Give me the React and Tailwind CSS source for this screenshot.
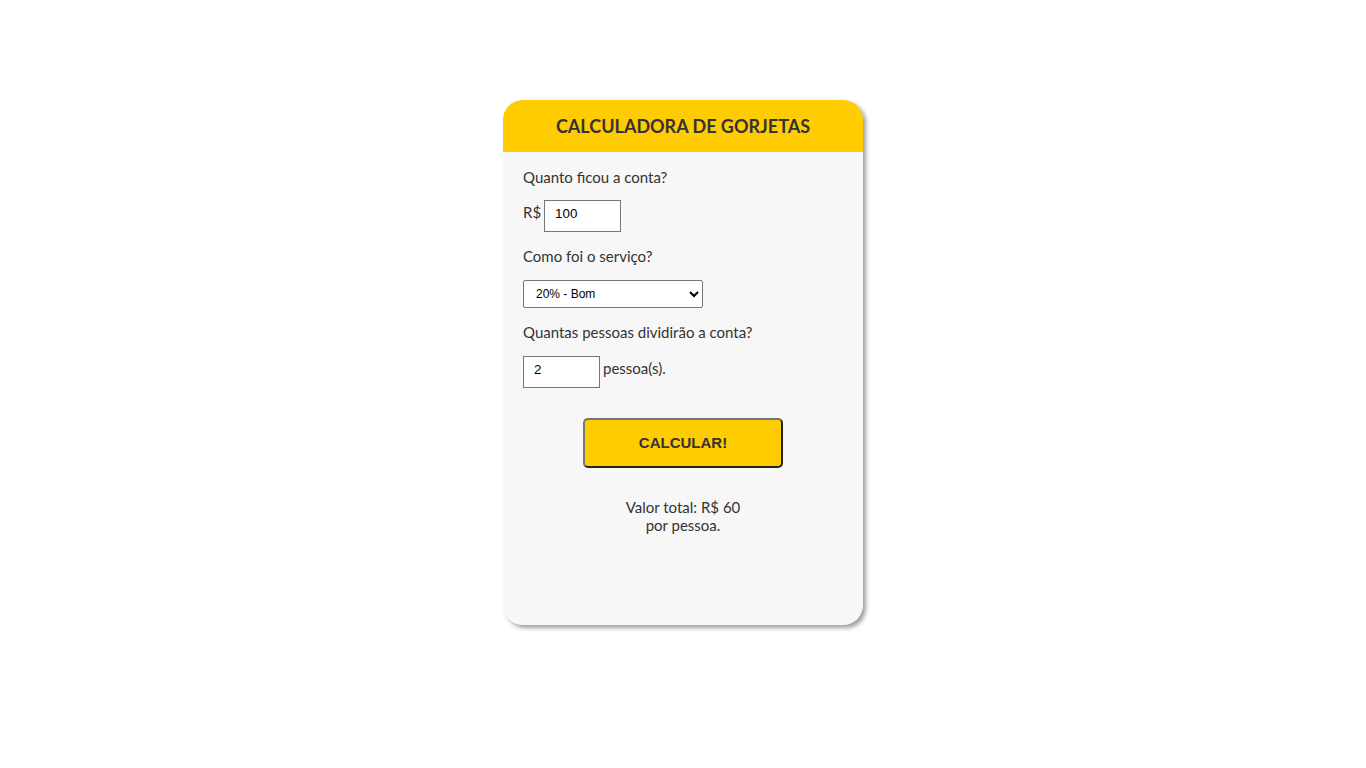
import React, { useState } from 'react';

const App = () => {
  const [conta, setConta] = useState('100');
  const [servico, setServico] = useState('0.2');
  const [pessoas, setPessoas] = useState('2');
  const [total, setTotal] = useState(60);

  const calcular = () => {
    const valor = (parseFloat(conta || 0) * (1 + parseFloat(servico))) / (parseInt(pessoas || 1) || 1);
    setTotal(Math.round(valor * 100) / 100);
  };

  return (
    <div className="min-h-screen bg-white pt-[100px] font-['Lato','Noto_Sans',sans-serif] text-[#333]">
      <div className="mx-auto w-[360px] h-[525px] rounded-[20px] bg-[#f7f7f7] shadow-[3px_3px_4px_#a0a0a0] overflow-hidden">
        <div className="h-[52px] bg-[#ffcc00] flex items-center justify-center">
          <h1 className="text-[18px] font-bold text-[#333]">CALCULADORA DE GORJETAS</h1>
        </div>
        <div className="px-5 pt-4">
          <p className="text-[15px] leading-[18px]">Quanto ficou a conta?</p>
          <div className="mt-[14px] flex items-baseline text-[15px]">
            <span className="mr-[3px]">R$</span>
            <input
              type="text"
              value={conta}
              onChange={(e) => setConta(e.target.value)}
              className="w-[77px] h-[32px] pl-[10px] pb-[6px] bg-white border border-[#767676] text-[13.33px] text-black font-['Liberation_Sans',Arial,sans-serif] outline-none"
            />
          </div>
          <p className="mt-[15px] text-[15px] leading-[18px]">Como foi o serviço?</p>
          <select
            value={servico}
            onChange={(e) => setServico(e.target.value)}
            className="mt-[15px] block w-[180px] h-[28px] pl-[8px] bg-white border border-[#767676] rounded-[2px] text-[12px] text-black font-['Liberation_Sans',Arial,sans-serif]"
          >
            <option value="0.3">30% - Muito bom</option>
            <option value="0.2">20% - Bom</option>
            <option value="0.15">15% - Bem</option>
            <option value="0.1">10% - Ok</option>
            <option value="0.05">5% - Ruim</option>
          </select>
          <p className="mt-[15px] text-[15px] leading-[18px]">Quantas pessoas dividirão a conta?</p>
          <div className="mt-[15px] flex items-baseline text-[15px]">
            <input
              type="text"
              value={pessoas}
              onChange={(e) => setPessoas(e.target.value)}
              className="w-[77px] h-[32px] pl-[10px] pb-[6px] bg-white border border-[#767676] text-[13.33px] text-black font-['Liberation_Sans',Arial,sans-serif] outline-none"
            />
            <span className="ml-[3px]">pessoa(s).</span>
          </div>
          <div className="mt-[30px] flex justify-center">
            <button
              onClick={calcular}
              className="w-[200px] h-[50px] bg-[#ffcc00] border-2 border-[#767676] border-r-[#222] border-b-[#222] rounded-[5px] text-[15px] font-bold text-[#333] font-['Liberation_Sans',Arial,sans-serif] cursor-pointer"
            >
              CALCULAR!
            </button>
          </div>
          <div className="mt-[30px] text-center text-[15px] leading-[18px]">
            <p>Valor total: R$ {total}</p>
            <p>por pessoa.</p>
          </div>
        </div>
      </div>
    </div>
  );
};

export default App;
